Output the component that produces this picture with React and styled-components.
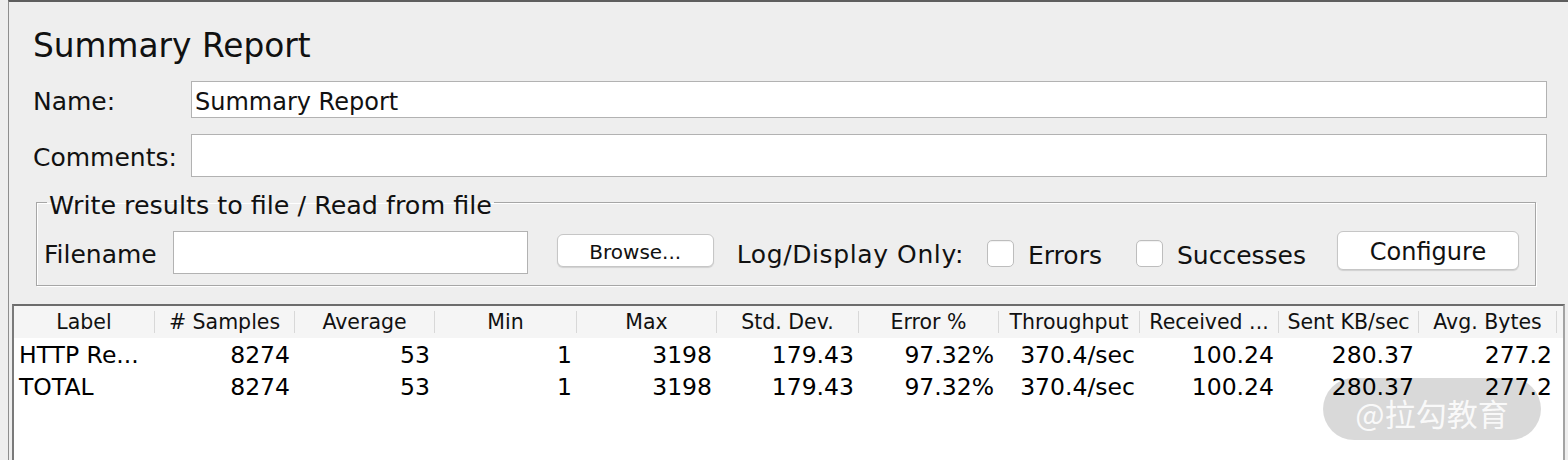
import React from 'react';
import styled, { createGlobalStyle } from 'styled-components';

const GlobalStyle = createGlobalStyle`
  html, body {
    margin: 0;
    padding: 0;
    background: #eeeeee;
    font-family: "DejaVu Sans", "Liberation Sans", sans-serif;
    color: #111111;
    overflow: hidden;
  }
`;

const Page = styled.div`
  padding-left: 8px;
  height: 460px;
  box-sizing: border-box;
`;

const Panel = styled.div`
  height: 100%;
  box-sizing: border-box;
  border-top: 2px solid #5e5e5e;
  border-left: 1px solid #8e8e8e;
  display: flex;
  flex-direction: column;
`;

const FormArea = styled.div`
  padding: 24px 21px 0 24px;
`;

const Title = styled.div`
  font-size: 32.8px;
  line-height: 40px;
  color: #111;
`;

const FieldRow = styled.div`
  display: grid;
  grid-template-columns: 158px 1fr;
  align-items: center;
  margin-top: ${({ $top }) => $top}px;
`;

const Label = styled.div`
  font-size: 25px;
  padding-top: 4px;
  white-space: nowrap;
`;

const TextBox = styled.div`
  height: ${({ $h }) => $h}px;
  box-sizing: border-box;
  background: #ffffff;
  border: 1px solid #b2b2b2;
  font-size: 24px;
  padding: 4px 3px 0;
  display: flex;
  align-items: center;
`;

const Group = styled.fieldset`
  margin: 10px 11px 0 3px;
  padding: 14px 0 11px 7px;
  border: 1px solid #a6a6a6;
  box-shadow: 1px 1px 0 #ffffff, inset 1px 1px 0 #ffffff;
  min-width: 0;
`;

const GroupTitle = styled.legend`
  font-size: 25.4px;
  line-height: 24px;
  padding: 6px 2px 0;
  margin-left: 3px;
`;

const FileRow = styled.div`
  display: flex;
  align-items: center;
  height: 43px;
`;

const RowText = styled.span`
  font-size: 25px;
  white-space: nowrap;
  margin-left: ${({ $ml = 0 }) => $ml}px;
  padding-top: ${({ $pt = 0 }) => $pt}px;
  letter-spacing: ${({ $ls = 0 }) => $ls}px;
`;

const FileBox = styled.div`
  width: 355px;
  height: 43px;
  box-sizing: border-box;
  margin-left: 16px;
  background: #ffffff;
  border: 1px solid #b2b2b2;
`;

const Button = styled.div`
  width: ${({ $w }) => $w}px;
  height: ${({ $h }) => $h}px;
  margin-left: ${({ $ml }) => $ml}px;
  margin-top: ${({ $mt = 0 }) => $mt}px;
  box-sizing: border-box;
  background: #ffffff;
  border: 1px solid #c6c6c6;
  border-radius: 6px;
  box-shadow: 0 1px 1px rgba(0, 0, 0, 0.13);
  font-size: ${({ $fs }) => $fs}px;
  display: flex;
  align-items: center;
  justify-content: center;
  padding-top: ${({ $pt = 0 }) => $pt}px;
`;

const CheckBox = styled.span`
  width: 27px;
  height: 27px;
  box-sizing: border-box;
  margin-left: ${({ $ml }) => $ml}px;
  margin-top: 2px;
  background: #ffffff;
  border: 1px solid #bdbdbd;
  border-radius: 5px;
  box-shadow: inset 0 1px 1px rgba(0, 0, 0, 0.06);
  flex-shrink: 0;
`;

const TablePane = styled.div`
  position: relative;
  flex: 1;
  margin: 18px 3px 0 3px;
  background: #ffffff;
  border-top: 2px solid #6c6c6c;
  border-left: 2px solid #7a7a7a;
  border-right: 2px solid #a3a3a3;
  overflow: hidden;
`;

const HeaderRow = styled.div`
  display: grid;
  grid-template-columns: ${({ $cols }) => $cols};
  height: 32px;
  box-sizing: border-box;
  padding-top: 5px;
  background: #f5f5f5;
`;

const HeaderCell = styled.div`
  height: 22px;
  line-height: 22px;
  font-size: 20.5px;
  text-align: center;
  border-right: 1px solid #d8d8d8;
  white-space: nowrap;
  overflow: hidden;
`;

const Body = styled.div`
  padding-top: 1px;
`;

const DataRow = styled.div`
  display: grid;
  grid-template-columns: ${({ $cols }) => $cols};
  height: 32px;
  line-height: 32px;
`;

const DataCell = styled.div`
  font-size: 23.5px;
  color: #000;
  white-space: nowrap;
  text-align: ${({ $align }) => $align};
  padding: 0 5px;
`;

const Watermark = styled.div`
  position: absolute;
  left: 1309px;
  top: 72px;
  width: 218px;
  height: 62px;
  border-radius: 31px;
  background: rgba(0, 0, 0, 0.15);
  color: rgba(255, 255, 255, 0.85);
  font-family: "Noto Sans CJK SC", sans-serif;
  font-size: 31px;
  display: flex;
  align-items: center;
  justify-content: center;
  padding-top: 6px;
  box-sizing: border-box;
`;

const columns = [
  { title: 'Label', width: 141, align: 'left' },
  { title: '# Samples', width: 140, align: 'right' },
  { title: 'Average', width: 140, align: 'right' },
  { title: 'Min', width: 142, align: 'right' },
  { title: 'Max', width: 140, align: 'right' },
  { title: 'Std. Dev.', width: 142, align: 'right' },
  { title: 'Error %', width: 140, align: 'right' },
  { title: 'Throughput', width: 141, align: 'right' },
  { title: 'Received ...', width: 139, align: 'right' },
  { title: 'Sent KB/sec', width: 140, align: 'right' },
  { title: 'Avg. Bytes', width: 138, align: 'right' },
];

const rows = [
  ['HTTP Re...', '8274', '53', '1', '3198', '179.43', '97.32%', '370.4/sec', '100.24', '280.37', '277.2'],
  ['TOTAL', '8274', '53', '1', '3198', '179.43', '97.32%', '370.4/sec', '100.24', '280.37', '277.2'],
];

const gridCols = columns.map((c) => `${c.width}px`).join(' ');

export default function App() {
  return (
    <Page>
      <GlobalStyle />
      <Panel>
        <FormArea>
          <Title>Summary Report</Title>
          <FieldRow $top={15}>
            <Label>Name:</Label>
            <TextBox $h={37}>Summary Report</TextBox>
          </FieldRow>
          <FieldRow $top={16}>
            <Label>Comments:</Label>
            <TextBox $h={43} />
          </FieldRow>
          <Group>
            <GroupTitle>Write results to file / Read from file</GroupTitle>
            <FileRow>
              <RowText $pt={3}>Filename</RowText>
              <FileBox />
              <Button $w={157} $h={33} $ml={29} $mt={-5} $fs={20} $pt={3}>
                Browse...
              </Button>
              <RowText $ml={23} $pt={3} $ls={0.6}>Log/Display Only:</RowText>
              <CheckBox $ml={23} />
              <RowText $ml={14} $pt={6}>Errors</RowText>
              <CheckBox $ml={34} />
              <RowText $ml={14} $pt={6}>Successes</RowText>
              <Button $w={182} $h={39} $ml={31} $mt={-4} $fs={24} $pt={2}>
                Configure
              </Button>
            </FileRow>
          </Group>
        </FormArea>
        <TablePane>
          <HeaderRow $cols={gridCols}>
            {columns.map((c) => (
              <HeaderCell key={c.title}>{c.title}</HeaderCell>
            ))}
          </HeaderRow>
          <Body>
            {rows.map((r, i) => (
              <DataRow key={i} $cols={gridCols}>
                {r.map((v, j) => (
                  <DataCell key={j} $align={columns[j].align}>
                    {v}
                  </DataCell>
                ))}
              </DataRow>
            ))}
          </Body>
          <Watermark>@拉勾教育</Watermark>
        </TablePane>
      </Panel>
    </Page>
  );
}
